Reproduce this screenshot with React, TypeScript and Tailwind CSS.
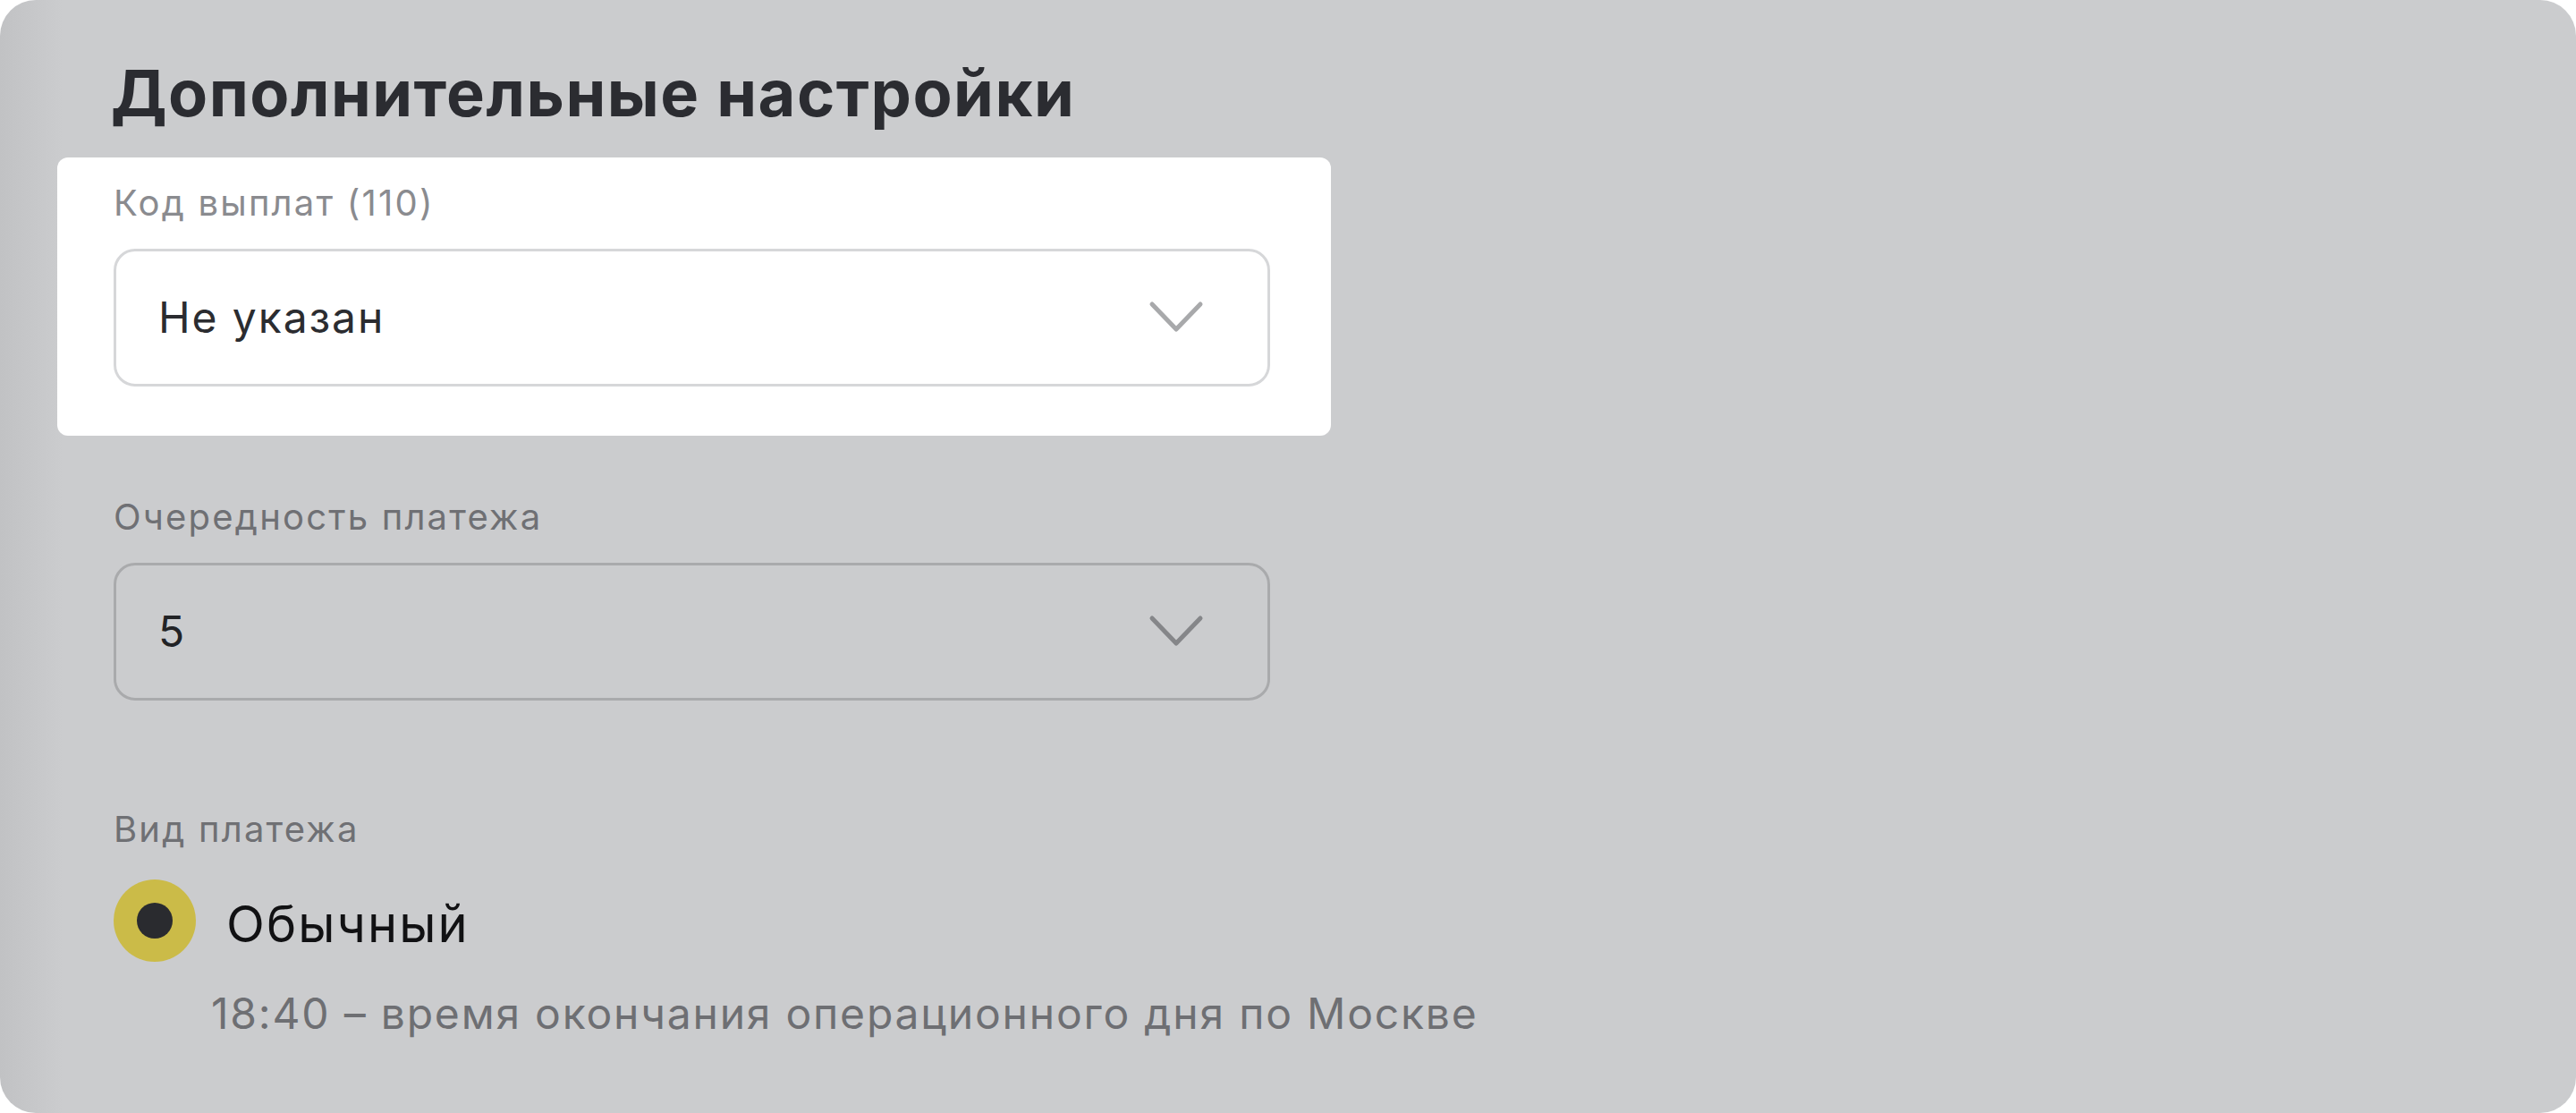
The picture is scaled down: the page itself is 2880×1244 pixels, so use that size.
import React from 'react';

const Chevron: React.FC<{ color: string }> = ({ color }) => (
  <svg width="64" height="40" viewBox="0 0 64 40" fill="none" className="shrink-0">
    <polyline
      points="5,5 32,33 59,5"
      stroke={color}
      strokeWidth="5"
      strokeLinecap="round"
      strokeLinejoin="round"
    />
  </svg>
);

const Field: React.FC<{
  label: string;
  value: string;
  highlighted?: boolean;
}> = ({ label, value, highlighted }) => (
  <div
    className={
      highlighted
        ? 'w-[1424px] rounded-[12px] bg-white pt-[27px] pb-[55px] pl-[63px]'
        : 'w-[1424px] pt-[27px] pb-[55px] pl-[63px]'
    }
  >
    <div
      className={
        highlighted
          ? 'text-[40px] leading-[48px] tracking-[2.2px] text-[#8a8b8f]'
          : 'text-[40px] leading-[48px] tracking-[2.2px] text-[#6f7074]'
      }
    >
      {label}
    </div>
    <div
      className={
        highlighted
          ? 'mt-[27px] flex h-[154px] w-[1293px] items-center justify-between rounded-[24px] border-[3px] border-[#d6d7d9] pl-[47px] pr-[70px]'
          : 'mt-[27px] flex h-[154px] w-[1293px] items-center justify-between rounded-[24px] border-[3px] border-[#a9aaac] pl-[47px] pr-[70px]'
      }
    >
      <span
        className={
          highlighted
            ? 'text-[48px] leading-[58px] tracking-[1.9px] text-[#2b2c30]'
            : 'text-[48px] leading-[58px] tracking-[1.9px] text-[#222326]'
        }
      >
        {value}
      </span>
      <Chevron color={highlighted ? '#a8a9ab' : '#858689'} />
    </div>
  </div>
);

export default function App() {
  return (
    <div className="min-h-[1244px] w-full bg-white font-['Inter',sans-serif]">
      <div className="h-[1244px] w-full overflow-hidden rounded-[40px] bg-[linear-gradient(to_right,#c1c2c4_0px,#cbccce_70px)] pl-[64px] pt-[60px]">
        <h1 className="pl-[60px] text-[72px] font-bold leading-[88px] tracking-[1.5px] text-[#2b2c31]">
          Дополнительные настройки
        </h1>

        <div className="mt-[28px]">
          <Field label="Код выплат (110)" value="Не указан" highlighted />
        </div>

        <div className="mt-[40px]">
          <Field label="Очередность платежа" value="5" />
        </div>

        <div className="mt-[38px] pl-[63px] pt-[27px]">
          <div className="text-[40px] leading-[48px] tracking-[2.2px] text-[#6f7074]">Вид платежа</div>

          <div className="mt-[32px] flex items-center gap-[34px]">
            <div className="flex h-[92px] w-[92px] items-center justify-center rounded-full bg-[#cbbb48]">
              <div className="h-[40px] w-[40px] rounded-full bg-[#2a2b2f]" />
            </div>
            <span className="mt-[8px] text-[56px] leading-[68px] tracking-[2.1px] text-[#111113]">
              Обычный
            </span>
          </div>

          <div className="ml-[109px] mt-[29px] text-[48px] leading-[58px] tracking-[1.8px] text-[#6e6f73]">
            18:40 – время окончания операционного дня по Москве
          </div>
        </div>
      </div>
    </div>
  );
}
